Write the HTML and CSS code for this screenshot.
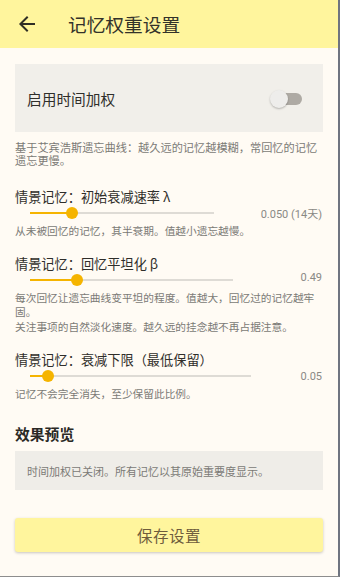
FILE: index.html
```html
<!DOCTYPE html>
<html lang="zh-CN">
<head>
    <meta charset="UTF-8">
    <meta name="viewport" content="width=device-width, initial-scale=1.0">
    <title>记忆权重设置</title>
    <link rel="stylesheet" href="styles.css">
</head>
<body>
    <div class="app">
        <header class="topbar">
            <svg class="back-icon" viewBox="0 0 24 24" width="24" height="24">
                <path d="M20 11H7.83l5.59-5.59L12 4l-8 8 8 8 1.41-1.41L7.83 13H20v-2z" fill="#2f2e25"/>
            </svg>
            <h1>记忆权重设置</h1>
        </header>

        <main class="content">
            <div class="switch-card">
                <span class="switch-label">启用时间加权</span>
                <span class="toggle"><span class="toggle-thumb"></span></span>
            </div>
            <p class="intro">基于艾宾浩斯遗忘曲线：越久远的记忆越模糊，常回忆的记忆遗忘更慢。</p>

            <section class="setting first">
                <div class="setting-label">情景记忆：初始衰减速率 λ</div>
                <div class="slider-row">
                    <div class="slider slider-a">
                        <div class="slider-fill" style="width: 22.8%"><span class="slider-thumb"></span></div>
                    </div>
                    <span class="slider-value">0.050 (14天)</span>
                </div>
                <p class="setting-desc">从未被回忆的记忆，其半衰期。值越小遗忘越慢。</p>
            </section>

            <section class="setting">
                <div class="setting-label">情景记忆：回忆平坦化 β</div>
                <div class="slider-row">
                    <div class="slider slider-b">
                        <div class="slider-fill" style="width: 23%"><span class="slider-thumb"></span></div>
                    </div>
                    <span class="slider-value raised">0.49</span>
                </div>
                <p class="setting-desc">每次回忆让遗忘曲线变平坦的程度。值越大，回忆过的记忆越牢固。</p>
                <p class="setting-desc extra">关注事项的自然淡化速度。越久远的挂念越不再占据注意。</p>
            </section>

            <section class="setting">
                <div class="setting-label">情景记忆：衰减下限（最低保留）</div>
                <div class="slider-row">
                    <div class="slider slider-c">
                        <div class="slider-fill" style="width: 8.3%"><span class="slider-thumb"></span></div>
                    </div>
                    <span class="slider-value">0.05</span>
                </div>
                <p class="setting-desc">记忆不会完全消失，至少保留此比例。</p>
            </section>

            <h2 class="preview-title">效果预览</h2>
            <div class="preview-box">时间加权已关闭。所有记忆以其原始重要度显示。</div>

            <button type="button" class="save-btn">保存设置</button>
        </main>
    </div>
</body>
</html>
```

FILE: styles.css
```css
* {
    margin: 0;
    padding: 0;
    box-sizing: border-box;
}

body {
    font-family: 'Noto Sans CJK SC', 'Noto Sans', sans-serif;
    background-color: #fffbf4;
    color: #2f2e2a;
}

.app {
    height: 577px;
    border-right: 2px solid #6f7480;
    border-bottom: 1px solid #8d8d8d;
    overflow: hidden;
}

/* top bar */
.topbar {
    height: 48px;
    background-color: #fff59d;
    display: flex;
    align-items: center;
    padding-left: 15px;
}

.back-icon {
    display: block;
}

.topbar h1 {
    margin-left: 29px;
    font-size: 18.7px;
    font-weight: 400;
    color: #33322a;
    line-height: 24px;
}

.content {
    padding: 16px 15px 0 15px;
}

/* switch card */
.switch-card {
    height: 68px;
    background-color: #f1efea;
    display: flex;
    align-items: center;
    justify-content: space-between;
    padding: 0 21px 0 12px;
}

.switch-label {
    font-size: 14.7px;
    color: #2f2e2a;
}

.toggle {
    position: relative;
    width: 32px;
    height: 12px;
    margin-top: 1px;
}

.toggle::before {
    content: "";
    position: absolute;
    left: 4px;
    right: 0;
    top: 0;
    bottom: 0;
    border-radius: 6px;
    background-color: #aeaaa4;
}

.toggle-thumb {
    position: absolute;
    left: 0;
    top: -3px;
    width: 18px;
    height: 18px;
    border-radius: 50%;
    background-color: #eeedeb;
    box-shadow: 0 1px 2px rgba(0, 0, 0, 0.25);
}

.intro {
    margin-top: 9px;
    font-size: 11.2px;
    line-height: 13px;
    color: #7b7a76;
}

/* slider settings */
.setting {
    margin-top: 16px;
}

.setting.first {
    margin-top: 20px;
}

.setting-label {
    font-size: 13.2px;
    line-height: 20px;
    color: #2f2e2a;
}

.slider-row {
    height: 12px;
    display: flex;
    align-items: center;
}

.slider {
    position: relative;
    margin-left: 15px;
    height: 2px;
    background-color: #dedbd5;
}

.slider-a { width: 184px; }
.slider-b { width: 203px; }
.slider-c { width: 221px; }

.slider-fill {
    position: relative;
    height: 2px;
    background-color: #f5b400;
}

.slider-thumb {
    position: absolute;
    right: -6px;
    top: -5px;
    width: 12px;
    height: 12px;
    border-radius: 50%;
    background-color: #f5b400;
}

.slider-value {
    margin-left: auto;
    margin-right: 1px;
    font-family: 'Roboto', 'Noto Sans CJK SC', sans-serif;
    font-size: 11px;
    color: #8a8985;
}

.slider-value.raised {
    margin-top: -5px;
}

.setting-desc {
    margin-top: 5px;
    font-size: 10.7px;
    line-height: 14px;
    color: #7b7a76;
}

.setting-desc.extra {
    margin-top: 1px;
}

/* preview */
.preview-title {
    margin-top: 22px;
    font-size: 14.8px;
    line-height: 22px;
    font-weight: 700;
    color: #2a2925;
}

.preview-box {
    margin-top: 6px;
    height: 39px;
    background-color: #efede8;
    display: flex;
    align-items: center;
    padding-left: 12px;
    font-size: 11px;
    color: #7b7a76;
}

/* save */
.save-btn {
    display: block;
    width: 100%;
    height: 34px;
    margin-top: 28px;
    border: none;
    border-radius: 3px;
    background-color: #fff59d;
    box-shadow: 0 1px 3px rgba(0, 0, 0, 0.22);
    font-family: 'Noto Sans CJK SC', sans-serif;
    font-size: 15.5px;
    letter-spacing: 0.5px;
    color: #6e5c3c;
    cursor: pointer;
}
```
